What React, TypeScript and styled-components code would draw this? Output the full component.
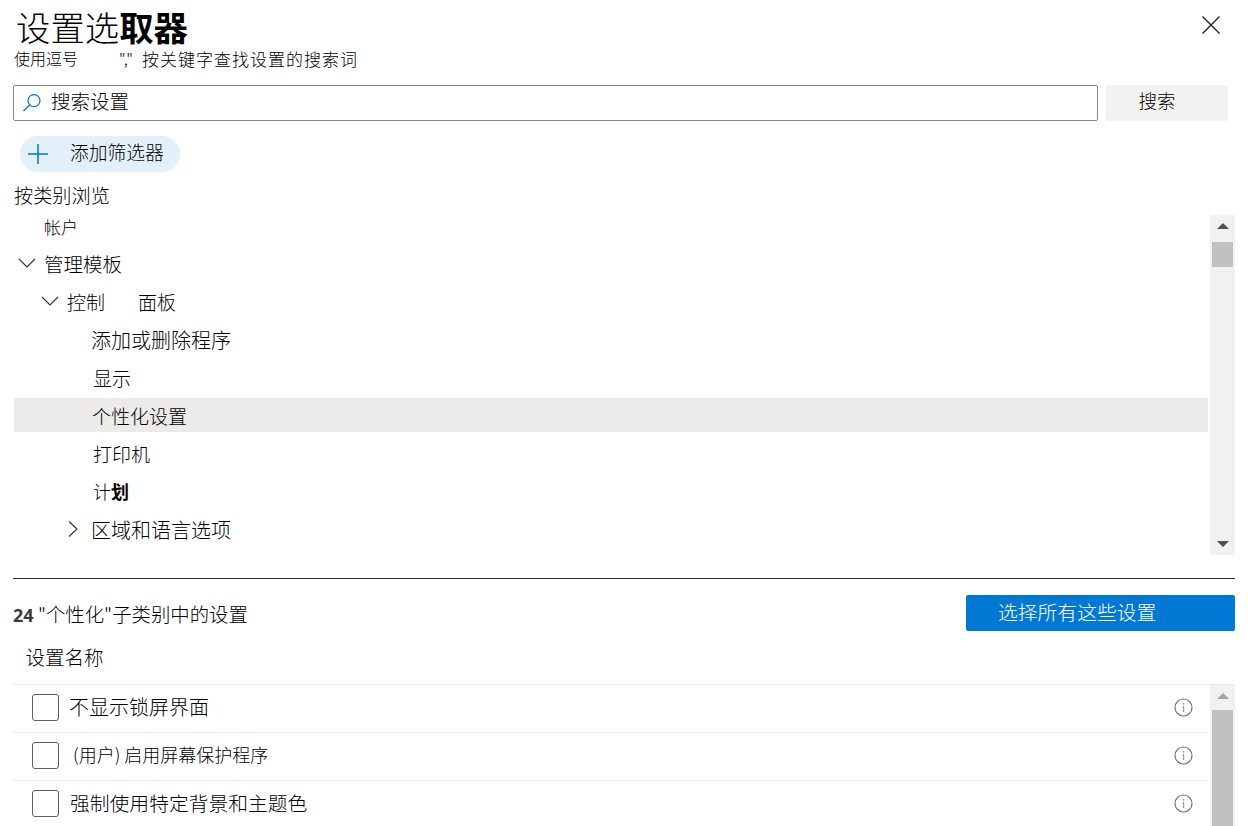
import React from "react";
import styled, { createGlobalStyle } from "styled-components";

const Global = createGlobalStyle`
  html, body { margin: 0; padding: 0; background: #fff; }
  body { font-family: "Noto Sans CJK SC", "Noto Sans", sans-serif; color: #000; font-weight: 300; }
  * { box-sizing: border-box; }
`;

const Page = styled.div`
  width: 1248px;
  height: 826px;
  overflow: hidden;
  padding: 0 13px;
  position: relative;
`;

const TitleRow = styled.div`
  height: 48px;
  display: flex;
  justify-content: space-between;
  align-items: flex-start;
  padding: 4px 14px 0 3px;
`;

const Title = styled.h1`
  margin: 0;
  font-size: 34.4px;
  line-height: 44px;
  font-weight: 300;
  color: #000;
  & b { font-weight: 700; }
`;

const CloseButton = styled.button`
  width: 20px;
  height: 20px;
  margin-top: 11px;
  padding: 0;
  border: 0;
  background: none;
  display: block;
`;

const Hint = styled.div`
  height: 37px;
  display: flex;
  align-items: flex-start;
  line-height: 20px;
  font-size: 16px;
  padding-left: 1px;
`;

const HintLead = styled.span`
  width: 105px;
`;

const HintQuote = styled.span`
  width: 23px;
`;

const HintRest = styled.span`
  font-size: 17px;
  letter-spacing: 1px;
  white-space: pre;
  line-height: 21px;
`;

const SearchRow = styled.div`
  display: flex;
  gap: 8px;
  height: 36px;
`;

const SearchBox = styled.div`
  width: 1085px;
  border: 1px solid #8a8886;
  border-radius: 2px;
  display: flex;
  align-items: center;
  gap: 9px;
  padding: 0 0 0 8px;
  font-size: 19.5px;
`;

const SearchIcon = styled.svg`
  width: 20px;
  height: 20px;
  flex: none;
`;

const SearchLabel = styled.span`
  padding-bottom: 5px;
`;

const SearchButton = styled.button`
  width: 122px;
  border: 0;
  border-radius: 2px;
  background: #f3f2f1;
  font: inherit;
  font-size: 18.5px;
  color: #000;
  padding: 0 20px 6px 0;
`;

const FilterPill = styled.button`
  margin: 15px 0 0 7px;
  width: 160px;
  height: 36px;
  border: 0;
  border-radius: 18px;
  background: #e3eff9;
  font: inherit;
  font-size: 18.8px;
  color: #000;
  display: flex;
  align-items: center;
  padding: 0 0 0 8px;
  gap: 22px;
`;

const PillLabel = styled.span`
  padding-bottom: 6px;
`;

const BrowseLabel = styled.div`
  margin: 13px 0 0 1px;
  height: 30px;
  font-size: 19.2px;
  line-height: 20px;
`;

const TreeArea = styled.div`
  display: flex;
  height: 340px;
`;

const TreeList = styled.div`
  width: 1194px;
  display: flex;
  flex-direction: column;
  gap: 4px;
  margin-left: 1px;
`;

const TreeRow = styled.div<{ $depth: number; $selected?: boolean; $small?: boolean; $size?: number }>`
  height: ${(p) => (p.$small ? 27 : 34)}px;
  flex: none;
  display: flex;
  align-items: center;
  padding-bottom: ${(p) => (p.$small ? 4 : 0)}px;
  padding-left: ${(p) => p.$depth}px;
  background: ${(p) => (p.$selected ? "#edebe9" : "transparent")};
  font-size: ${(p) => p.$size ?? (p.$small ? 17 : 19)}px;
  white-space: pre;
  & b { font-weight: 700; }
`;

const Chevron = styled.svg<{ $gap: number }>`
  width: 18px;
  height: 18px;
  flex: none;
  margin-right: ${(p) => p.$gap}px;
`;

const PanelWord = styled.span`
  margin-left: 33px;
`;

const ScrollTrack = styled.div<{ $height: number }>`
  width: 25px;
  height: ${(p) => p.$height}px;
  background: #f1f1f1;
  flex: none;
  margin-left: 2px;
  display: flex;
  flex-direction: column;
  align-items: center;
  padding-top: 8px;
`;

const ArrowUp = styled.div<{ $faded?: boolean }>`
  width: 0;
  height: 0;
  border-left: 6px solid transparent;
  border-right: 6px solid transparent;
  border-bottom: 6px solid ${(p) => (p.$faded ? "#a3a3a3" : "#505050")};
`;

const ArrowDown = styled.div`
  width: 0;
  height: 0;
  border-left: 6px solid transparent;
  border-right: 6px solid transparent;
  border-top: 6px solid #505050;
  margin-top: auto;
  margin-bottom: 8px;
`;

const Thumb = styled.div<{ $height: number; $gap: number }>`
  width: 21px;
  height: ${(p) => p.$height}px;
  margin-top: ${(p) => p.$gap}px;
  background: #c1c1c1;
  flex: none;
`;

const Divider = styled.hr`
  margin: 23px 0 0;
  border: 0;
  height: 1px;
  background: #323130;
`;

const SummaryRow = styled.div`
  margin-top: 16px;
  height: 36px;
  display: flex;
  justify-content: space-between;
  align-items: center;
`;

const Summary = styled.div`
  font-size: 19.4px;
  & b {
    font-family: "Open Sans", sans-serif;
    font-size: 18px;
    font-weight: 700;
    color: #3b3a39;
  }
`;

const PrimaryButton = styled.button`
  width: 269px;
  height: 36px;
  border: 0;
  border-radius: 2px;
  background: #0078d4;
  color: #fff;
  font: inherit;
  font-size: 19.8px;
  text-align: left;
  padding: 0 0 3px 32px;
`;

const ColumnHead = styled.div`
  height: 53px;
  padding: 12px 0 0 12.5px;
  font-size: 19.5px;
  line-height: 28px;
`;

const TableArea = styled.div`
  display: flex;
  height: 142px;
  border-top: 1px solid #edebe9;
`;

const Rows = styled.div`
  width: 1195px;
  flex: none;
`;

const SettingRow = styled.div`
  height: 48px;
  border-bottom: 1px solid #edebe9;
  display: flex;
  align-items: center;
  padding: 0 15px 0 19px;
`;

const Check = styled.span`
  width: 27px;
  height: 27px;
  border: 1px solid #605e5c;
  border-radius: 3px;
  flex: none;
  margin-right: 11px;
  margin-bottom: 2px;
`;

const SettingName = styled.span<{ $nudge?: number; $size: number }>`
  flex: 1;
  white-space: pre;
  font-size: ${(p) => p.$size}px;
  margin-left: ${(p) => p.$nudge ?? 0}px;
  padding-bottom: 5px;
`;

const InfoIcon = styled.svg`
  width: 19px;
  height: 19px;
  flex: none;
  margin-bottom: 2px;
`;

const Info = () => (
  <InfoIcon viewBox="0 0 19 19" fill="none">
    <circle cx="9.5" cy="9.5" r="8.5" stroke="#777" strokeWidth="1.2" />
    <rect x="8.9" y="8" width="1.3" height="6" fill="#999" />
    <rect x="8.9" y="5" width="1.3" height="1.6" fill="#999" />
  </InfoIcon>
);

const Down = () => (
  <Chevron $gap={8} viewBox="0 0 18 18" fill="none">
    <path d="M1 5l8 8 8-8" stroke="#323130" strokeWidth="1.1" />
  </Chevron>
);

const Right = () => (
  <Chevron $gap={9} viewBox="0 0 18 18" fill="none">
    <path d="M5 1.5l8 7.5-8 7.5" stroke="#323130" strokeWidth="1.1" />
  </Chevron>
);

const settings: { name: string; nudge?: number; size: number }[] = [
  { name: "不显示锁屏界面", nudge: -1, size: 20 },
  { name: "(用户) 启用屏幕保护程序", nudge: 3, size: 18 },
  { name: "强制使用特定背景和主题色", size: 19.8 },
];

export default function App() {
  return (
    <Page>
      <Global />
      <TitleRow>
        <Title>
          设置选<b>取器</b>
        </Title>
        <CloseButton aria-label="关闭">
          <svg width="20" height="20" viewBox="0 0 20 20" fill="none">
            <path d="M1.5 1.5l17 17M18.5 1.5l-17 17" stroke="#201f1e" strokeWidth="1.3" />
          </svg>
        </CloseButton>
      </TitleRow>
      <Hint>
        <HintLead>使用逗号</HintLead>
        <HintQuote>","</HintQuote>
        <HintRest>按关键字查找设置的搜索词</HintRest>
      </Hint>
      <SearchRow>
        <SearchBox>
          <SearchIcon viewBox="0 0 20 20" fill="none">
            <circle cx="12" cy="7.6" r="6" stroke="#0078d4" strokeWidth="1.2" />
            <path d="M7.6 12L1.5 18" stroke="#0078d4" strokeWidth="1.4" />
          </SearchIcon>
          <SearchLabel>搜索设置</SearchLabel>
        </SearchBox>
        <SearchButton>搜索</SearchButton>
      </SearchRow>
      <FilterPill>
        <svg width="20" height="20" viewBox="0 0 20 20" fill="none">
          <path d="M10 0v20M0 10h20" stroke="#0078d4" strokeWidth="1.5" />
        </svg>
        <PillLabel>添加筛选器</PillLabel>
      </FilterPill>
      <BrowseLabel>按类别浏览</BrowseLabel>
      <TreeArea>
        <TreeList>
          <TreeRow $depth={30} $small>帐户</TreeRow>
          <TreeRow $depth={4} $size={19.5}>
            <Down />
            管理模板
          </TreeRow>
          <TreeRow $depth={27}>
            <Down />
            控制
            <PanelWord>面板</PanelWord>
          </TreeRow>
          <TreeRow $depth={77} $size={20}>添加或删除程序</TreeRow>
          <TreeRow $depth={79}>显示</TreeRow>
          <TreeRow $depth={78} $selected>个性化设置</TreeRow>
          <TreeRow $depth={79}>打印机</TreeRow>
          <TreeRow $depth={79} $size={18}>
            <span>计<b>划</b></span>
          </TreeRow>
          <TreeRow $depth={50} $size={20}>
            <Right />
            区域和语言选项
          </TreeRow>
        </TreeList>
        <ScrollTrack $height={340}>
          <ArrowUp />
          <Thumb $height={25} $gap={13} />
          <ArrowDown />
        </ScrollTrack>
      </TreeArea>
      <Divider />
      <SummaryRow>
        <Summary>
          <b>24</b> "个性化"子类别中的设置
        </Summary>
        <PrimaryButton>选择所有这些设置</PrimaryButton>
      </SummaryRow>
      <ColumnHead>设置名称</ColumnHead>
      <TableArea>
        <Rows>
          {settings.map((s) => (
            <SettingRow key={s.name}>
              <Check />
              <SettingName $nudge={s.nudge} $size={s.size}>{s.name}</SettingName>
              <Info />
            </SettingRow>
          ))}
        </Rows>
        <ScrollTrack $height={142}>
          <ArrowUp $faded />
          <Thumb $height={120} $gap={11} />
        </ScrollTrack>
      </TableArea>
    </Page>
  );
}
